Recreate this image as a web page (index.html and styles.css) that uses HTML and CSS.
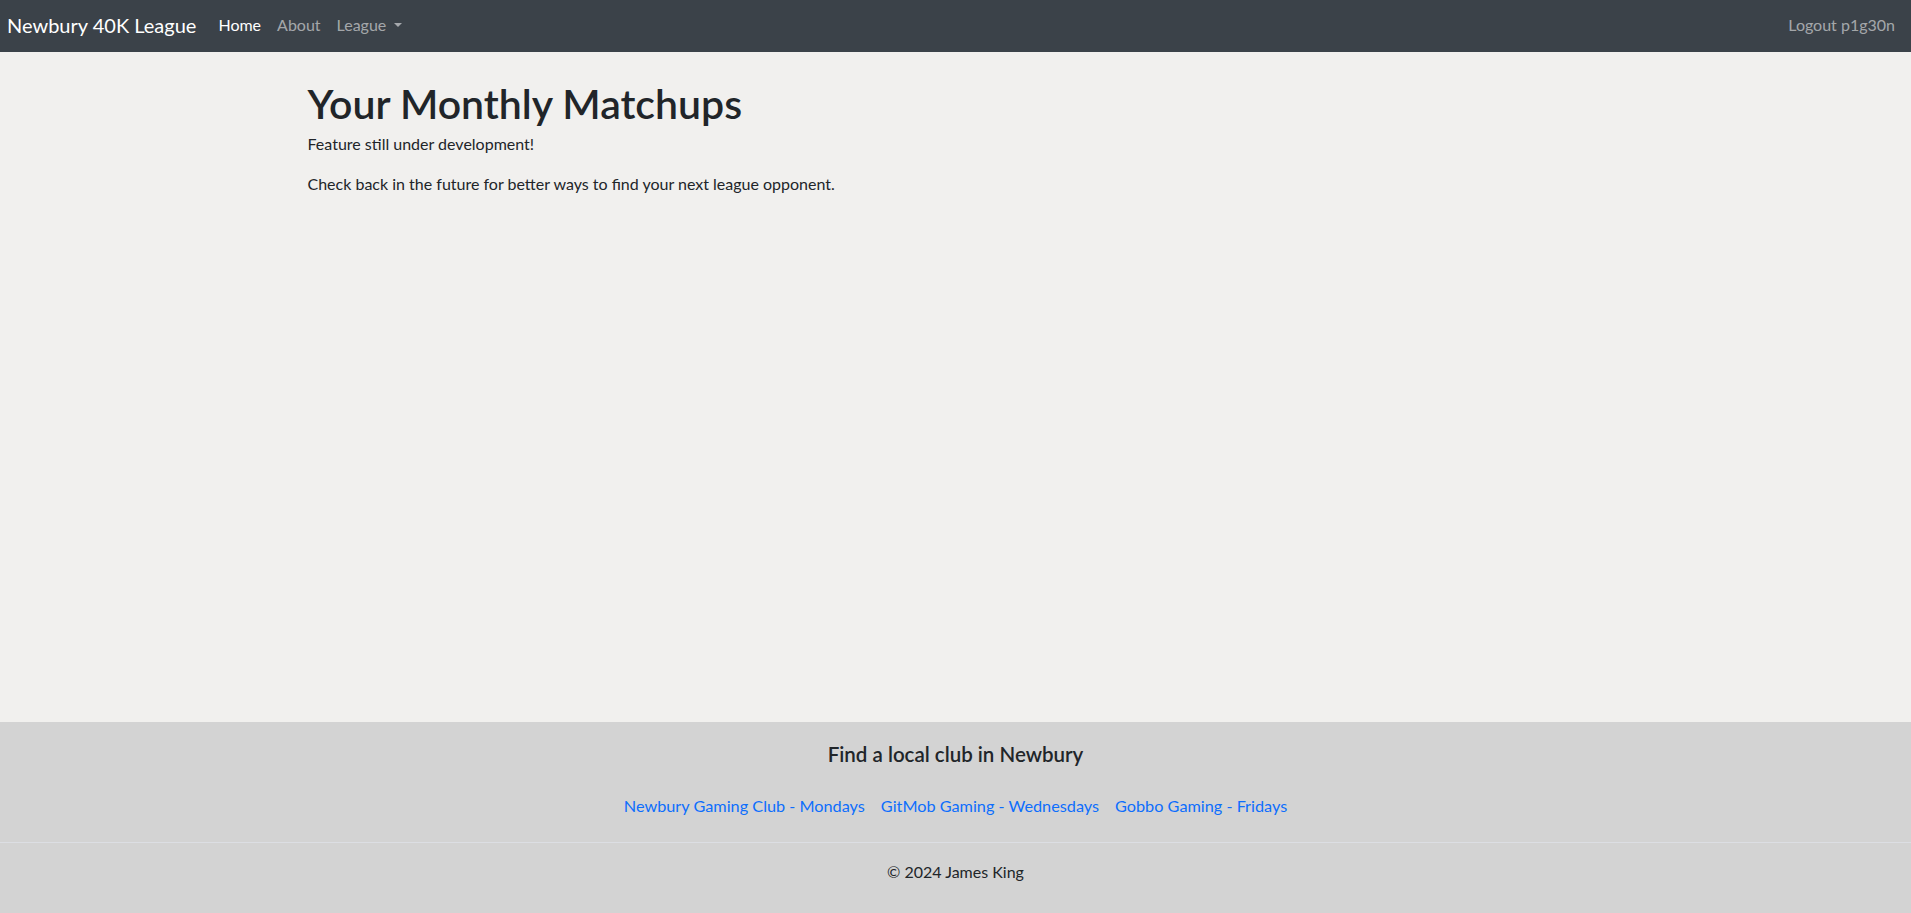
FILE: index.html
```html
<!DOCTYPE html>
<html lang="en">
<head>
<meta charset="utf-8">
<title>Newbury 40K League</title>
<link rel="stylesheet" href="styles.css">
</head>
<body>
<nav class="navbar">
  <a class="brand" href="#">Newbury 40K League</a>
  <ul class="nav-links">
    <li><a class="nav-link active" href="#">Home</a></li>
    <li><a class="nav-link" href="#">About</a></li>
    <li><a class="nav-link dropdown-toggle" href="#">League</a></li>
  </ul>
  <a class="nav-link logout" href="#">Logout p1g30n</a>
</nav>
<main class="main">
  <div class="container">
    <h1 class="title">Your Monthly Matchups</h1>
    <p class="text">Feature still under development!</p>
    <p class="text">Check back in the future for better ways to find your next league opponent.</p>
  </div>
</main>
<footer class="footer">
  <div class="clubs">
    <h5 class="clubs-title">Find a local club in Newbury</h5>
    <ul class="club-links">
      <li><a href="#">Newbury Gaming Club - Mondays</a></li>
      <li><a href="#">GitMob Gaming - Wednesdays</a></li>
      <li><a href="#">Gobbo Gaming - Fridays</a></li>
    </ul>
  </div>
  <div class="copyright">© 2024 James King</div>
</footer>
</body>
</html>
```
FILE: styles.css
```css
* { box-sizing: border-box; }
html, body { margin: 0; padding: 0; }
body {
  font-family: Lato, "Liberation Sans", sans-serif;
  font-size: 16px;
  line-height: 1.5;
  color: #212529;
  background: #f1f0ee;
  min-height: 100vh;
  display: flex;
  flex-direction: column;
}
a { text-decoration: none; }

.navbar {
  height: 52px;
  background: #3b4249;
  display: flex;
  align-items: center;
  padding: 0 16px 2px 7px;
}
.brand {
  color: #fff;
  font-size: 20px;
  line-height: 30px;
  margin-right: 14px;
}
.nav-links {
  list-style: none;
  display: flex;
  margin: 0;
  padding: 0;
  flex: 1;
}
.nav-link {
  display: block;
  padding: 8px;
  color: rgba(255,255,255,0.55);
  font-size: 16px;
  line-height: 24px;
}
.nav-link.active { color: #fff; }
.dropdown-toggle::after {
  content: "";
  display: inline-block;
  margin-left: 0.45em;
  vertical-align: 0.255em;
  border-top: 0.28em solid;
  border-right: 0.28em solid transparent;
  border-left: 0.28em solid transparent;
}
.logout { padding-right: 0; }

.main { flex: 1; }
.container {
  max-width: 1320px;
  margin: 0 auto;
  padding: 0 12px;
}
.title {
  font-size: 41px;
  font-weight: 600;
  line-height: 1.2;
  margin: 27px 0 4px;
}
.text { margin: 0 0 16px; }

.footer { background: #d3d3d3; }
.clubs {
  padding: 20px 0 24px;
  text-align: center;
}
.clubs-title {
  font-size: 20.5px;
  font-weight: 600;
  line-height: 24px;
  margin: 0 0 28px;
}
.club-links {
  list-style: none;
  margin: 0;
  padding: 0;
  display: flex;
  justify-content: center;
  gap: 16px;
}
.club-links a {
  color: #0d6efd;
  font-size: 16.25px;
}
.copyright {
  border-top: 1px solid #dcdee3;
  text-align: center;
  padding: 17px 0 29px;
}
```
